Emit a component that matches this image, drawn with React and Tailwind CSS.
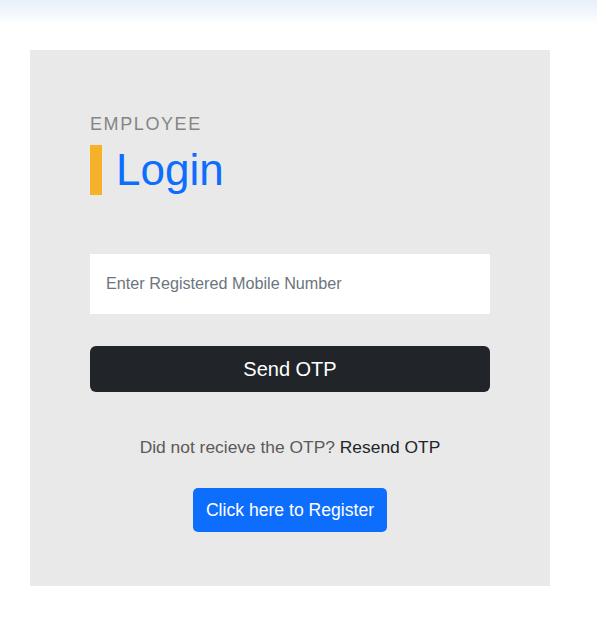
import React from "react";

export default function App() {
  return (
    <div className="min-h-[641px] w-full bg-[linear-gradient(to_bottom,#e6effa_0px,#ffffff_24px)] pt-[50px] pl-[30px] font-['Liberation_Sans',Arial,sans-serif]">
      <div className="w-[520px] h-[536px] bg-[#e9e9e9] px-[60px] pt-[64px]">
        <div className="text-[18px] leading-[21.6px] tracking-[1.6px] text-[#858585]">
          EMPLOYEE
        </div>
        <div className="mt-[9px] flex items-center gap-[14px]">
          <div className="w-[12px] h-[50px] bg-[#f7b02a]" />
          <h1 className="text-[44px] leading-[50px] text-[#0d6efd]">Login</h1>
        </div>

        <input
          type="text"
          placeholder="Enter Registered Mobile Number"
          className="mt-[59px] block w-full h-[60px] bg-white pl-[16px] text-[16.2px] text-[#212529] placeholder:text-[#6c757d] outline-none"
        />

        <button className="mt-[32px] block w-full h-[46px] rounded-[6px] bg-[#212529] text-white text-[20px]">
          Send OTP
        </button>

        <p className="mt-[42px] text-center text-[17.4px] leading-[26.4px] text-[#5a5a5a]">
          Did not recieve the OTP?{" "}
          <a href="#" className="text-[#212529]">
            Resend OTP
          </a>
        </p>

        <div className="mt-[28px] flex justify-center">
          <button className="h-[44px] rounded-[5px] bg-[#0d6efd] px-[13px] text-white text-[17.6px]">
            Click here to Register
          </button>
        </div>
      </div>
    </div>
  );
}
